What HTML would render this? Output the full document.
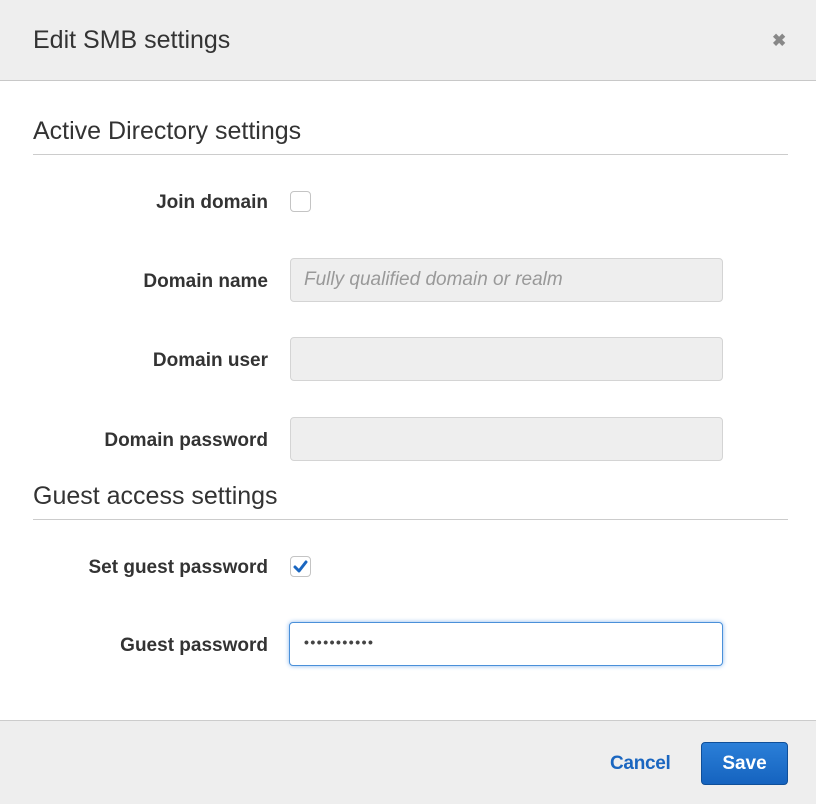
<!DOCTYPE html>
<html><head><style>
*{box-sizing:border-box;margin:0;padding:0}
body{width:816px;height:804px;background:#fff;font-family:"Liberation Sans",Arial,sans-serif;position:relative;overflow:hidden;color:#333}
.hdr{position:absolute;left:0;top:0;width:816px;height:81px;background:#eeeeee;border-bottom:1px solid #c8c8c8}
.hdr h1{position:absolute;left:33px;top:26px;font-size:25px;font-weight:normal;color:#333}
.x{position:absolute;left:772px;top:31px;font-size:17px;color:#888;font-weight:bold}
.sec{position:absolute;left:33px;font-size:25px;color:#333}
.line{position:absolute;left:33px;width:755px;height:1px;background:#ccc}
.lab{position:absolute;right:548px;font-size:19px;font-weight:bold;color:#333;text-align:right;white-space:nowrap}
.inp{position:absolute;left:290px;width:433px;height:44px;background:#eeeeee;border:1px solid #d4d4d4;border-radius:4px;font-size:19px;color:#999;font-style:italic;padding:10px 13px}
.cb{position:absolute;left:290px;width:21px;height:21px;border:1px solid #c4c4c4;border-radius:4px;background:#fff}
.ftr{position:absolute;left:0;top:720px;width:816px;height:84px;background:#eeeeee;border-top:1px solid #ccc}
</style></head><body>
<div class="hdr"><h1>Edit SMB settings</h1><div class="x">✖</div></div>
<div class="sec" style="top:117px">Active Directory settings</div>
<div class="line" style="top:154px"></div>
<div class="lab" style="top:192px">Join domain</div>
<div class="cb" style="top:191px"></div>
<div class="lab" style="top:271px">Domain name</div>
<div class="inp" style="top:258px">Fully qualified domain or realm</div>
<div class="lab" style="top:350px">Domain user</div>
<div class="inp" style="top:337px"></div>
<div class="lab" style="top:430px">Domain password</div>
<div class="inp" style="top:417px"></div>
<div class="sec" style="top:482px">Guest access settings</div>
<div class="line" style="top:519px"></div>
<div class="lab" style="top:557px">Set guest password</div>
<div class="cb" style="top:556px"><svg width="19" height="19" viewBox="0 0 19 19" style="position:absolute;left:0;top:0"><path d="M4 10 L8 14 L15 5" fill="none" stroke="#1a66c0" stroke-width="3" stroke-linecap="round" stroke-linejoin="round"/></svg></div>
<div class="lab" style="top:635px">Guest password</div>
<div style="position:absolute;left:289px;top:622px;width:434px;height:44px;background:#fff;border:1px solid #4a90d9;border-radius:4px;box-shadow:0 0 5px #8ab8ee;font-size:14px;color:#444;padding:11px 14px;letter-spacing:1.5px;font-weight:bold">•••••••••••</div>
<div class="ftr">
<div style="position:absolute;left:610px;top:32px;font-size:19px;font-weight:bold;color:#1a66c0;letter-spacing:-0.3px">Cancel</div>
<div style="position:absolute;left:701px;top:21px;width:87px;height:43px;border-radius:4px;background:linear-gradient(#2b7fd8,#1563bf);border:1px solid #0f4f99;color:#fff;font-size:19px;font-weight:bold;text-align:center;line-height:41px">Save</div>
</div>
</body></html>
